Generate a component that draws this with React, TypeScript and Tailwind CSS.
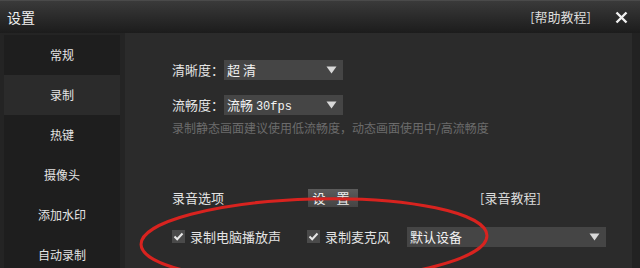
import React from "react";

const Arrow: React.FC = () => (
  <svg width="11" height="8" viewBox="0 0 11 8" className="shrink-0">
    <path d="M0.5 0.5 H10.5 L5.5 7.5 Z" fill="#d8d8d8" />
  </svg>
);

const Check: React.FC = () => (
  <span className="flex h-[13px] w-[13px] shrink-0 items-center justify-center bg-[#4a4a4a]">
    <svg width="11" height="9" viewBox="0 0 11 9">
      <path d="M1.5 4.5 L4.2 7.2 L9.5 1.5" stroke="#e8e8e8" strokeWidth="2" fill="none" />
    </svg>
  </span>
);

const Select: React.FC<{ value: React.ReactNode; width: string }> = ({ value, width }) => (
  <div className={`flex h-[20px] items-center justify-between bg-[#454545] pl-[3px] pr-[6px] ${width}`}>
    <span className="text-[13px] text-[#f2f2f2]">{value}</span>
    <Arrow />
  </div>
);

const menu = ["常规", "录制", "热键", "摄像头", "添加水印", "自动录制"];

export default function App() {
  return (
    <div className="relative h-[268px] w-[640px] overflow-hidden bg-[#1a1a1a] font-['Noto_Sans_CJK_SC',sans-serif] text-[#e4e4e4]">
      {/* title bar */}
      <div className="flex h-[33px] items-center justify-between border-t border-[#4a4a4a] bg-gradient-to-b from-[#3a3a3a] to-[#1c1c1c] pl-[7px] pr-[12px]">
        <span className="text-[14px] text-[#f0f0f0]">设置</span>
        <div className="flex items-center gap-[24px]">
          <span className="text-[13px] text-[#dcdcdc]">[帮助教程]</span>
          <svg width="13" height="13" viewBox="0 0 13 13">
            <path d="M1.5 1.5 L11.5 11.5 M11.5 1.5 L1.5 11.5" stroke="#f0f0f0" strokeWidth="2.4" />
          </svg>
        </div>
      </div>

      <div className="flex h-[235px]">
        {/* sidebar */}
        <div className="flex w-[125px] shrink-0 flex-col bg-[#242424] pl-[4px] pr-[5px] pt-[2px]">
          {menu.map((m, i) => (
            <div
              key={m}
              className={`flex h-[40px] shrink-0 items-center justify-center text-[12px] ${
                i === 1 ? "bg-[#2b2b2b]" : "bg-[#1e1e1e]"
              }`}
            >
              {m}
            </div>
          ))}
        </div>

        {/* content */}
        <div className="relative flex-1 border-r-[8px] border-[#222] bg-[#2b2b2b] pl-[47px] pt-[27px] text-[12px]">
          <div className="flex items-center">
            <span className="w-[52px] text-[13px]">清晰度：</span>
            <Select value="超 清" width="w-[119px]" />
          </div>
          <div className="mt-[15px] flex items-center">
            <span className="w-[52px] text-[13px]">流畅度：</span>
            <Select
              value={
                <>
                  流畅 <span className="font-['Liberation_Mono',monospace] text-[12px]">30fps</span>
                </>
              }
              width="w-[119px]"
            />
          </div>
          <div className="mt-[4px] text-[#6b6b6b]">录制静态画面建议使用低流畅度，动态画面使用中/高流畅度</div>

          <div className="mt-[51px] flex items-center">
            <span className="w-[136px] text-[13px]">录音选项</span>
            <div className="flex h-[18px] w-[50px] items-center justify-center bg-gradient-to-b from-[#5c5c5c] to-[#444] text-[13px] tracking-[4px] text-[#eee]">
              设 置
            </div>
            <span className="ml-[122px] text-[13px] text-[#dcdcdc]">[录音教程]</span>
          </div>

          <div className="mt-[19px] flex items-center text-[13px]">
            <Check />
            <span className="ml-[5px] w-[117px]">录制电脑播放声</span>
            <Check />
            <span className="ml-[5px] w-[82px]">录制麦克风</span>
            <Select value="默认设备" width="w-[199px]" />
          </div>

          {/* red annotation ellipse */}
          <svg className="pointer-events-none absolute left-0 top-0" width="515" height="235" viewBox="0 0 515 235">
            <ellipse cx="189" cy="207" rx="173" ry="41" fill="none" stroke="#d8231f" strokeWidth="3" transform="rotate(-1.5 189 207)" />
          </svg>
        </div>
      </div>
    </div>
  );
}
